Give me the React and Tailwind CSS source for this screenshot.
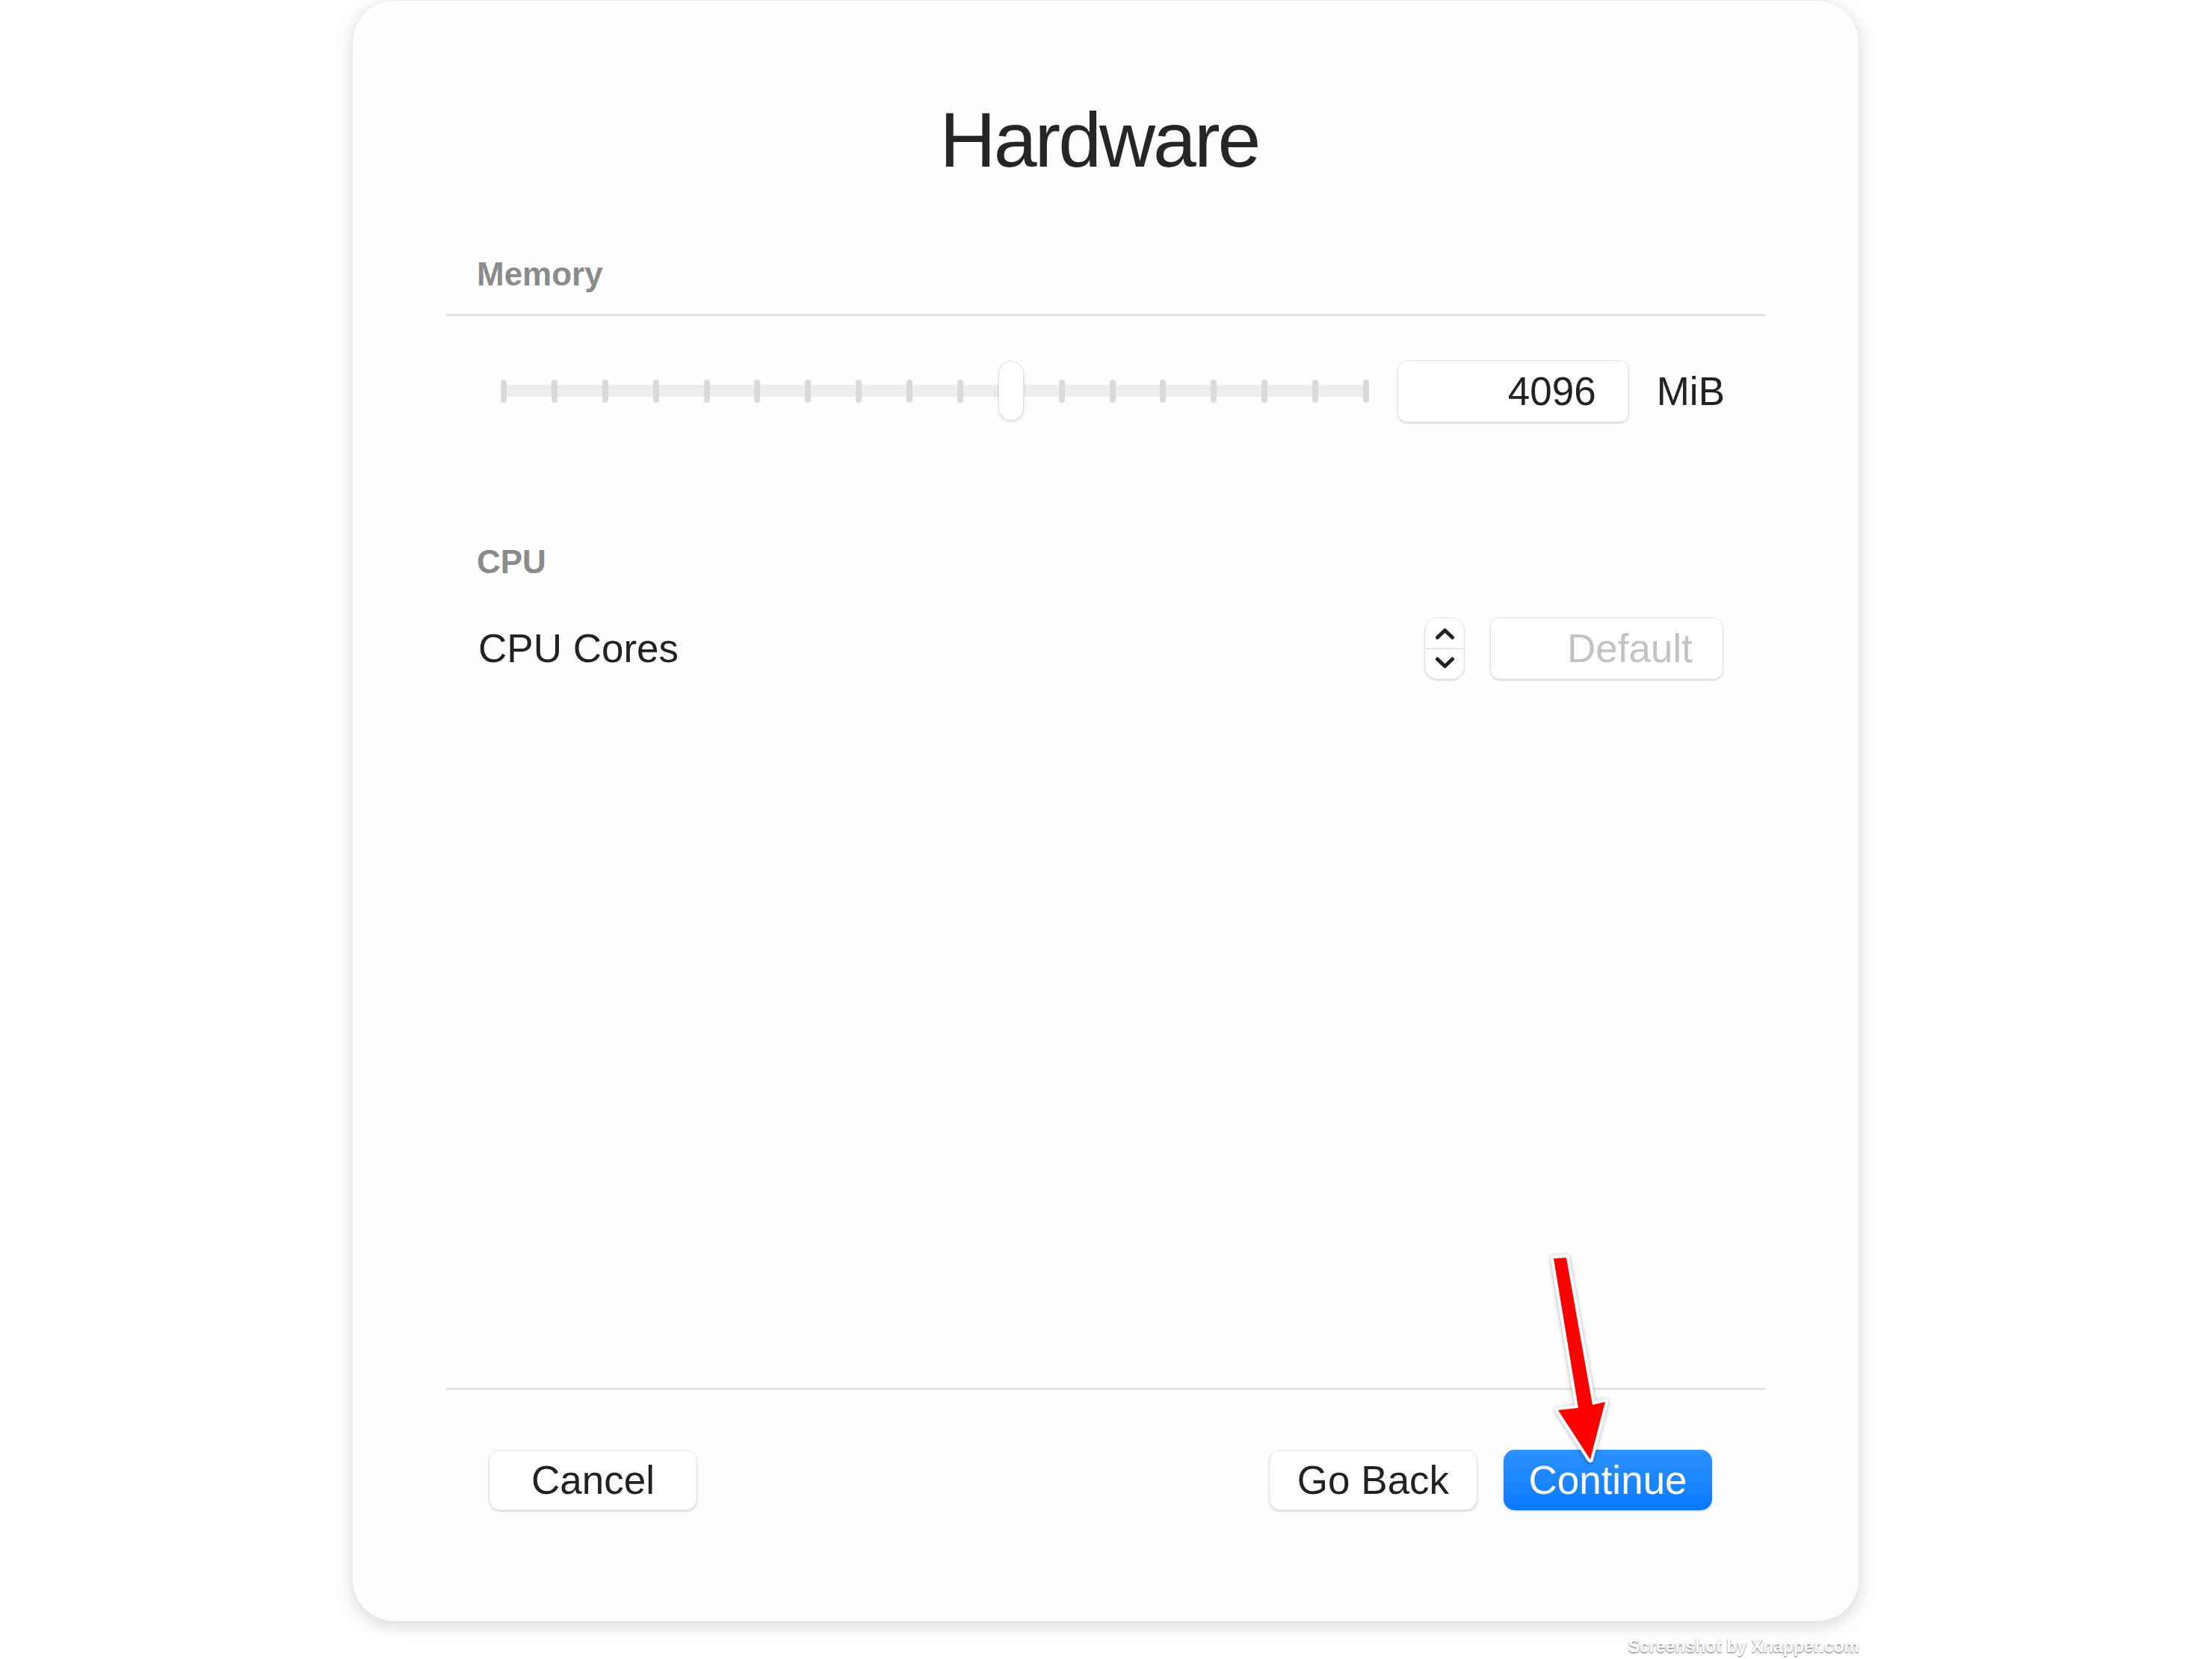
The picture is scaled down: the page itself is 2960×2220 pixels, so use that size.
const ticks = Array.from({ length: 18 }, (_, i) => i);

function Chevron({ up }) {
  return (
    <svg width="27" height="16" viewBox="0 0 27 16" fill="none">
      <polyline
        points={up ? "3.5,13 13.5,3.5 23.5,13" : "3.5,3 13.5,12.5 23.5,3"}
        stroke="#222"
        strokeWidth="5"
        strokeLinecap="round"
        strokeLinejoin="round"
      />
    </svg>
  );
}

export default function App() {
  const font = { fontFamily: '"Liberation Sans", Arial, sans-serif' };

  return (
    <div className="relative w-[2960px] h-[2220px] bg-white flex flex-col overflow-hidden" style={font}>
      {/* window card */}
      <div className="ml-[471px] w-[2017px] h-[2170px] bg-[#fefefe] rounded-[56px] border border-[#e9e9e9] shadow-[0_6px_24px_rgba(0,0,0,0.16)] flex flex-col px-[125px] pt-[134px] pb-[148px]">
        <h1 className="pr-[17px] text-center text-[104px] leading-none text-[#262626] tracking-[-3px]">Hardware</h1>

        <div className="mt-[106px] pl-[41px] text-[44px] leading-none font-bold text-[#8b8b8b]">Memory</div>
        <div className="mt-[31px] h-[3px] bg-[#e3e3e3]" />

        {/* memory slider row */}
        <div className="mt-[58px] h-[84px] flex items-center pl-[73px] pr-[54px]">
          <div className="w-[1163px] h-[16px] rounded-full bg-[#ededed] flex items-center justify-between">
            {ticks.map(i => (
              <div key={i} className="w-[8px] h-[16px] flex items-center justify-center">
                {i === 10 ? (
                  <div className="shrink-0 w-[34px] h-[80px] rounded-full bg-white border border-[#dedede] shadow-[0_2px_4px_rgba(0,0,0,0.12)]" />
                ) : (
                  <div className="shrink-0 w-[8px] h-[31px] rounded-full bg-[#dadada]" />
                )}
              </div>
            ))}
          </div>
          <div className="ml-[38px] w-[310px] h-[83px] rounded-[13px] bg-white border border-[#e4e4e4] shadow-[0_2px_3px_rgba(0,0,0,0.13)] flex items-center justify-end pr-[43px] text-[53px] leading-none text-[#222]">
            4096
          </div>
          <div className="ml-[37px] text-[53px] leading-none text-[#222]">MiB</div>
        </div>

        <div className="mt-[165px] pl-[41px] text-[44px] leading-none font-bold text-[#8b8b8b]">CPU</div>

        {/* cpu cores row */}
        <div className="mt-[52px] h-[83px] flex items-center pl-[43px] pr-[56px]">
          <div className="flex-1 text-[53px] leading-none text-[#222]">CPU Cores</div>
          <div className="w-[54px] h-[83px] rounded-[18px] bg-white border border-[#e4e4e4] shadow-[0_2px_3px_rgba(0,0,0,0.13)] flex flex-col">
            <div className="flex-1 flex items-center justify-center pt-[2px]">
              <Chevron up />
            </div>
            <div className="h-[2px] bg-[#e6e6e6]" />
            <div className="flex-1 flex items-center justify-center pb-[2px]">
              <Chevron />
            </div>
          </div>
          <div className="ml-[34px] w-[312px] h-[83px] rounded-[13px] bg-white border border-[#e4e4e4] shadow-[0_2px_3px_rgba(0,0,0,0.13)] flex items-center justify-end pr-[40px] text-[53px] leading-none text-[#c3c3c3]">
            Default
          </div>
        </div>

        <div className="flex-1" />
        <div className="h-[3px] bg-[#e3e3e3]" />

        {/* buttons */}
        <div className="mt-[80px] h-[81px] flex items-center pl-[57px] pr-[71px]">
          <button className="w-[279px] h-[81px] rounded-[15px] bg-white border border-[#e2e2e2] shadow-[0_2px_3px_rgba(0,0,0,0.14)] text-[53px] leading-none text-[#222]">
            Cancel
          </button>
          <div className="flex-1" />
          <button className="w-[279px] h-[81px] rounded-[15px] bg-white border border-[#e2e2e2] shadow-[0_2px_3px_rgba(0,0,0,0.14)] text-[53px] leading-none text-[#222]">
            Go Back
          </button>
          <button className="ml-[35px] w-[279px] h-[81px] rounded-[15px] bg-gradient-to-b from-[#2c92ff] to-[#0a79ff] shadow-[0_1px_3px_rgba(0,90,255,0.25)] text-[53px] leading-none text-white">
            Continue
          </button>
        </div>
      </div>

      <div className="ml-[472px] w-[2016px] mt-[22px] flex justify-end">
        <span className="text-[23px] leading-none font-bold text-white [text-shadow:0_1px_2px_rgba(0,0,0,0.65)]">
          Screenshot by Xnapper.com
        </span>
      </div>

      {/* red annotation arrow */}
      <svg
        className="absolute left-[2060px] top-[1670px] drop-shadow-[0_1px_3px_rgba(0,0,0,0.3)]"
        width="110"
        height="300"
        viewBox="0 0 110 300"
      >
        <polygon
          points="19,14 36,13 71,210 88,206 68,283 25,217 52,214"
          fill="#ff0000"
          stroke="#ffffff"
          strokeWidth="8"
          strokeLinejoin="round"
          paintOrder="stroke"
        />
      </svg>
    </div>
  );
}
